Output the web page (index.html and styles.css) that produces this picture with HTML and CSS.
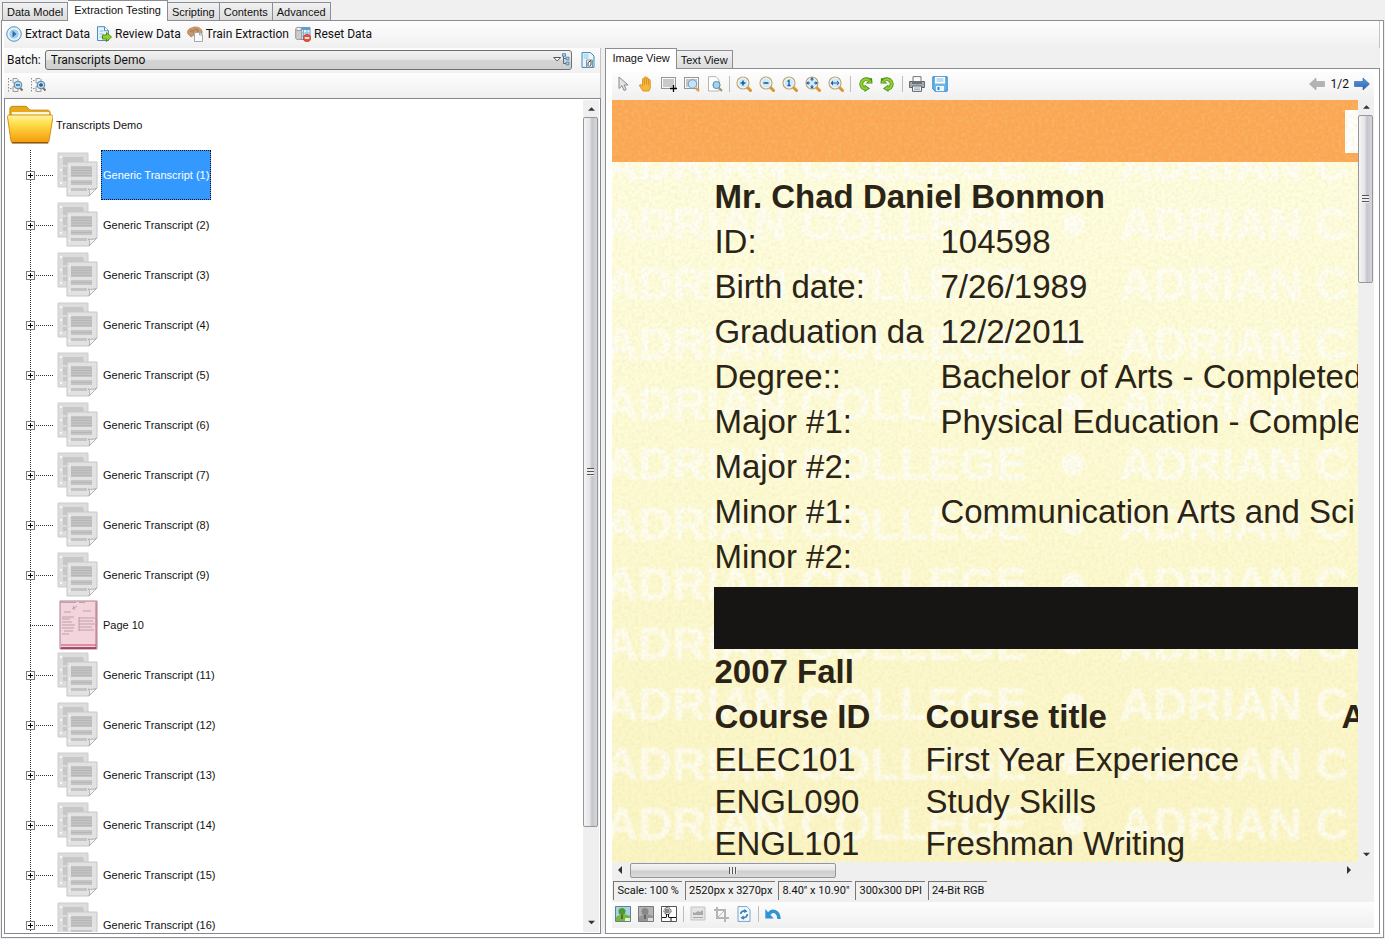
FILE: index.html
```html
<!DOCTYPE html>
<html lang="en">
<head>
<meta charset="utf-8">
<title>Extraction Testing</title>
<link rel="stylesheet" href="styles.css">
</head>
<body>
<svg class="defs" aria-hidden="true">
  <defs>
    <linearGradient id="gold" x1="0" y1="0" x2="0" y2="1"><stop offset="0" stop-color="#fff3a0"/><stop offset=".35" stop-color="#ffdb45"/><stop offset="1" stop-color="#f39a0b"/></linearGradient>
    <linearGradient id="blueArrow" x1="0" y1="0" x2="0" y2="1"><stop offset="0" stop-color="#5e9be0"/><stop offset="1" stop-color="#2a62b0"/></linearGradient>
    <symbol id="doc" viewBox="0 0 42 46">
      <path d="M1 1h30v34H1z" fill="#dcdcdc" stroke="#cdcdcd"/>
      <path d="M6 6h20M6 8h21M6 10h20M6 12h20M6 16h20M6 18h20M6 20h20M6 22h20M6 26h20M6 28h20" stroke="#b2b2b2"/>
      <path d="M10 10h30v26l-8 8H10z" fill="#e2e2e2" stroke="#c6c6c6"/>
      <path d="M14 14h21v11H14zM14 28h21v5H14zM14 36h16v3H14z" fill="#c4c4c4"/>
      <path d="M14 16h21M14 18.500h21M14 21h21M14 23.500h21M14 30.500h21" stroke="#b0b0b0" stroke-width=".7"/>
      <path d="M32 44c1-3 1-6-1-7 3 1 7 0 9-1z" fill="#f4f4f4" stroke="#b0b0b0"/>
      <path d="M3 5h2M3 18h2M3 31h2M12 14h1M12 27h1M12 39h1" stroke="#fff" stroke-width="1.500"/>
    </symbol>
    <symbol id="lens" viewBox="0 0 16 16">
      <path d="M11 11l3.500 3.500" stroke="#d9962f" stroke-width="3" stroke-linecap="round"/>
      <circle cx="7" cy="7" r="6" fill="#cfe9fb" stroke="#c9a469" stroke-width="1.200"/>
      <circle cx="7" cy="7" r="4.800" fill="none" stroke="#eef8ff" stroke-width="1"/>
    </symbol>
    <symbol id="tree-lens" viewBox="0 0 17 16">
      <path d="M1.500 1v14M3 3.500h3M3 11.500h3" stroke="#8a8a8a" stroke-dasharray="1.500 1.500" fill="none"/>
      <path d="M6 1.500h4l1 1V6H6zM6 9.500h4l1 1v4H6z" fill="#f2f2f2" stroke="#9c9c9c"/>
      <path d="M13 11l2.500 2.500" stroke="#7d6e5c" stroke-width="2"/>
      <circle cx="11" cy="8" r="3.800" fill="#b9dbf2" stroke="#5785a8"/>
    </symbol>
  </defs>
</svg>

<nav class="tabs main-tabs" aria-label="Views">
  <button>Data Model</button><button class="active">Extraction Testing</button><button>Scripting</button><button>Contents</button><button>Advanced</button>
</nav>

<main class="window">
  <div class="toolbar actions">
    <button><svg viewBox="0 0 16 16"><circle cx="8" cy="8" r="7.300" fill="#d8ecf9" stroke="#5d93bd"/><circle cx="8" cy="8" r="5.200" fill="#a4d0ee" stroke="#fff" stroke-width=".8"/><path d="M6.500 4.500l4 3.500-4 3.500z" fill="#2a70ad"/></svg>Extract Data</button>
    <button><svg viewBox="0 0 16 16"><path d="M1.500.7h7l4 4v9.800h-11z" fill="#e4f3fc" stroke="#4c8dbd"/><path d="M8.500.7v4h4" fill="#fff" stroke="#4c8dbd"/><path d="M3.500 5h4M3.500 8h4M3.500 11h3" stroke="#8abde0"/><path d="M6.500 9h4V6.500l5 4.500-5 4.500V13h-4z" fill="#95d12e" stroke="#4f8c13"/></svg>Review Data</button>
    <button><svg viewBox="0 0 16 16"><path d="M1 8C-.5 5 2 2 5 2c2-2 8-1 9.500 2C16 6 15 9 12 9l-3 1-2-1-3 2z" fill="#c89a6b" stroke="#a87b50" stroke-width=".7"/><path d="M3 6c2-3 5-1 3 1M7 4c3-2 6 1 3 2" stroke="#91663f" fill="none" stroke-width=".8"/><path d="M7.500 6.500H13L15.500 9v6.500h-8z" fill="#fafafa" stroke="#a7a7a7"/><path d="M12.500 6.500V9h3" fill="none" stroke="#a7a7a7"/></svg>Train Extraction</button>
    <button><svg viewBox="0 0 16 16"><path d="M5 1.500h10v12H5z" fill="#eaf5fd" stroke="#5a9bce"/><path d="M5 2.500h10" stroke="#5aa0d8" stroke-width="3"/><path d="M5 7h10M5 10h10M8.500 4v9M12 4v9" stroke="#79b1da"/><path d="M.7 3v9c0 2 6 2 6 0V3" fill="#ccc" stroke="#969696"/><ellipse cx="3.700" cy="3" rx="3" ry="1.700" fill="#eee" stroke="#969696"/><circle cx="12" cy="12" r="3.700" fill="#e5533d" stroke="#b8301f" stroke-width=".6"/><path d="M9.700 12h4.600" stroke="#fff" stroke-width="1.600"/></svg>Reset Data</button>
  </div>

  <div class="split">
    <section class="left">
      <div class="toolbar batch">
        <label for="batch">Batch:</label>
        <div class="combo">
          <select id="batch"><option>Transcripts Demo</option></select>
          <svg viewBox="0 0 17 13" aria-hidden="true"><path d="M.7 4.500h7L4.200 8z" fill="#fff" stroke="#555"/><path d="M10.500 1v9.500M10.500 5.500h3M10.500 10.500h3" stroke="#666" fill="none"/><path d="M9.500.7h3v2.600h-3zM13 4.200h3v2.600h-3zM13 9.200h3v2.600h-3z" fill="#a7d1f0" stroke="#3e7eab" stroke-width=".8"/></svg>
        </div>
        <button class="icon" aria-label="Batch document"><svg viewBox="0 0 16 16"><path d="M2 .6h8.500L14 4v11.400H2z" fill="#e9f5fc" stroke="#3f86b5"/><path d="M3.500 2h5v5h-5z" fill="#b8def4"/><path d="M6.500 15V8h6v7z" fill="#fff" stroke="#7d98aa"/><path d="M8 14v-3.500l3-2V13l-1.500 1" fill="none" stroke="#444"/></svg></button>
      </div>
      <div class="toolbar find">
        <button class="icon" aria-label="Collapse"><svg viewBox="0 0 17 16"><use href="#tree-lens"/><path d="M9 8h4" stroke="#245b8c" stroke-width="1.300"/></svg></button>
        <button class="icon" aria-label="Expand"><svg viewBox="0 0 17 16"><use href="#tree-lens"/><path d="M9 8h4M11 6v4" stroke="#245b8c" stroke-width="1.300"/></svg></button>
      </div>

      <div class="tree-box">
        <div class="tree">
          <div class="root">
            <svg viewBox="0 0 48 42"><path d="M3 12V4c0-2 1-3 3-3h13c3 0 3 4 6 4h17c2 0 3 1 3 3v8H3z" fill="#e9a71a" stroke="#c5850e"/><path d="M5 7h39v5H5z" fill="#fff6d5"/><path d="M2 10h44c1.500 0 2 1 2 2l-4 24c0 2-1 3-3 3H7c-2 0-3-1-3-3L.5 12c0-1 .5-2 1.500-2z" fill="url(#gold)" stroke="#d48a10"/><path d="M5 39h38" stroke="#8a5a14" stroke-width="1.500"/></svg>
            <span>Transcripts Demo</span>
          </div>
          <ul>
            <li class="selected"><button class="expand" aria-label="Expand"></button><svg><use href="#doc"/></svg><span>Generic Transcript (1)</span></li>
            <li><button class="expand" aria-label="Expand"></button><svg><use href="#doc"/></svg><span>Generic Transcript (2)</span></li>
            <li><button class="expand" aria-label="Expand"></button><svg><use href="#doc"/></svg><span>Generic Transcript (3)</span></li>
            <li><button class="expand" aria-label="Expand"></button><svg><use href="#doc"/></svg><span>Generic Transcript (4)</span></li>
            <li><button class="expand" aria-label="Expand"></button><svg><use href="#doc"/></svg><span>Generic Transcript (5)</span></li>
            <li><button class="expand" aria-label="Expand"></button><svg><use href="#doc"/></svg><span>Generic Transcript (6)</span></li>
            <li><button class="expand" aria-label="Expand"></button><svg><use href="#doc"/></svg><span>Generic Transcript (7)</span></li>
            <li><button class="expand" aria-label="Expand"></button><svg><use href="#doc"/></svg><span>Generic Transcript (8)</span></li>
            <li><button class="expand" aria-label="Expand"></button><svg><use href="#doc"/></svg><span>Generic Transcript (9)</span></li>
            <li class="page"><svg viewBox="0 0 42 50"><path d="M3 1h37v48H3z" fill="#f3d3dc" stroke="#a8808a"/><path d="M39 2v46" stroke="#c76a80"/><path d="M4 45h35" stroke="#c04a68"/><path d="M4 48h35" stroke="#962343" stroke-width="1.500"/><path d="M4 2.500h15M22 2.500h6M15 9l5-3M16 6l2 4M7 12h7M26 11h8M5 17h12M5 19h8M5 22h10M5 25h13M5 28h12M7 31h9M5 34h7M22 18h16M22 21h14M22 24h16M22 27h13M22 30h15M22 17v14" stroke="#a98b95" stroke-width=".7" fill="none"/></svg><span>Page 10</span></li>
            <li><button class="expand" aria-label="Expand"></button><svg><use href="#doc"/></svg><span>Generic Transcript (11)</span></li>
            <li><button class="expand" aria-label="Expand"></button><svg><use href="#doc"/></svg><span>Generic Transcript (12)</span></li>
            <li><button class="expand" aria-label="Expand"></button><svg><use href="#doc"/></svg><span>Generic Transcript (13)</span></li>
            <li><button class="expand" aria-label="Expand"></button><svg><use href="#doc"/></svg><span>Generic Transcript (14)</span></li>
            <li><button class="expand" aria-label="Expand"></button><svg><use href="#doc"/></svg><span>Generic Transcript (15)</span></li>
            <li><button class="expand" aria-label="Expand"></button><svg><use href="#doc"/></svg><span>Generic Transcript (16)</span></li>
          </ul>
        </div>
        <div class="scroll-v tree-scroll">
          <svg class="arrow" viewBox="0 0 8 5"><path d="M4 0l4 4H0z"/></svg>
          <div class="track"><div class="thumb"><i></i></div></div>
          <svg class="arrow" viewBox="0 0 8 5"><path d="M4 4.500l4-4H0z"/></svg>
        </div>
      </div>
    </section>

    <section class="right">
      <nav class="tabs" aria-label="Document view">
        <button class="active">Image View</button><button>Text View</button>
      </nav>
      <div class="viewer">
        <div class="toolbar tools">
          <button class="icon" aria-label="Select"><svg viewBox="0 0 16 16"><path d="M4 1v11.500l3-2.800 2 4.800 2.200-1-2.100-4.500h4z" fill="#e3e3e3" stroke="#8b8b8b"/></svg></button>
          <button class="icon" aria-label="Pan"><svg viewBox="0 0 16 16"><path d="M5 15C3 12 1.500 10.500 1.500 9c.5-1 2-.7 3 1V3.500C4.500 2 6 2 6.300 3.500V1.800c.2-1.500 2-1.300 2 0v.7c.2-1.200 2-1.200 2 .3V4c.5-1 2-.8 2 .5V11c0 2-.8 3-1.300 4z" fill="#f7b638" stroke="#d08a1c" stroke-width=".8"/><path d="M6.400 3.500v5M8.400 2.500v6M10.400 4v5" stroke="#d08a1c" stroke-width=".8"/></svg></button>
          <button class="icon" aria-label="Add region"><svg viewBox="0 0 16 16"><path d="M2 3h11v8H2z" fill="#c9c9c9"/><path d="M.5 1.500h14v11H.5z" fill="none" stroke="#333" stroke-dasharray="1 1"/><path d="M12.500 9v7M9 12.500h7" stroke="#000" stroke-width="1.300"/></svg></button>
          <button class="icon" aria-label="Zoom region"><svg viewBox="0 0 16 16"><path d="M2 3h11v8H2z" fill="#c9c9c9"/><path d="M.5 1.500h14v11H.5z" fill="none" stroke="#333" stroke-dasharray="1 1"/><path d="M12 12l3 3" stroke="#dda14a" stroke-width="2.500"/><circle cx="8.500" cy="8" r="4.300" fill="#c1e2f7" stroke="#6d9ab9"/></svg></button>
          <button class="icon" aria-label="Zoom page"><svg viewBox="0 0 16 16"><path d="M1.500.6H9L12 4v11H1.500z" fill="#fff" stroke="#b5b5b5"/><path d="M12 12l3 3" stroke="#a98a5c" stroke-width="2"/><circle cx="9.500" cy="9" r="3.600" fill="#a5d2ee" stroke="#5485a7"/></svg></button>
          <hr>
          <button class="icon" aria-label="Zoom in"><svg viewBox="0 0 16 16"><use href="#lens"/><path d="M4.500 7h5M7 4.500v5" stroke="#18609c" stroke-width="1.600"/></svg></button>
          <button class="icon" aria-label="Zoom out"><svg viewBox="0 0 16 16"><use href="#lens"/><path d="M4.500 7h5" stroke="#18609c" stroke-width="1.600"/></svg></button>
          <button class="icon" aria-label="Actual size"><svg viewBox="0 0 16 16"><use href="#lens"/><path d="M5.500 5.500L7 4.500V9.500M5.500 9.500h3" stroke="#18609c" stroke-width="1.300" fill="none"/></svg></button>
          <button class="icon" aria-label="Fit page"><svg viewBox="0 0 16 16"><use href="#lens"/><path d="M7 1l2 2.500H5zM7 13l2-2.500H5zM1 7l2.500-2v4zM13 7l-2.500-2v4z" fill="#18609c"/><path d="M7 3v2M7 9v2M3 7h2M9 7h2" stroke="#18609c"/></svg></button>
          <button class="icon" aria-label="Fit width"><svg viewBox="0 0 16 16"><use href="#lens"/><path d="M2.500 7L5 4.500v5zM11.500 7L9 4.500v5zM4 6.500h6v1H4z" fill="#18609c"/></svg></button>
          <hr>
          <button class="icon" aria-label="Rotate left"><svg viewBox="0 0 16 16"><path d="M13 4.800A5 5 0 1 0 8 13" fill="none" stroke="#4e8c14" stroke-width="3.800"/><path d="M15.500 7.500H8.500l3-2.500 1-2.500 2.500-.5zM7.500 8.500l5.500 4-5.500 3.500z" fill="#4e8c14"/><path d="M12.500 4.800A4.800 4.800 0 1 0 8 12.800" fill="none" stroke="#8fd32c" stroke-width="2.200"/><path d="M14.500 6.700h-3.700L14 4zM8.200 10l3.300 2.500-3.300 2z" fill="#8fd32c"/></svg></button>
          <button class="icon" aria-label="Rotate right"><svg viewBox="0 0 16 16"><path d="M3 4.800A5 5 0 1 1 8 13" fill="none" stroke="#4e8c14" stroke-width="3.800"/><path d="M.5 7.500h7l-3-2.500-1-2.500L1 2zM8.500 8.500L3 12.500 8.500 16z" fill="#4e8c14"/><path d="M3.500 4.800A4.800 4.800 0 1 1 8 12.800" fill="none" stroke="#8fd32c" stroke-width="2.200"/><path d="M1.500 6.700h3.700L2 4zM7.800 10l-3.300 2.500 3.300 2z" fill="#8fd32c"/></svg></button>
          <hr>
          <button class="icon" aria-label="Print"><svg viewBox="0 0 16 16"><path d="M4 .6h8V6H4z" fill="#fafafa" stroke="#777"/><path d="M.6 5.500h14.800v6H.6z" fill="#a9adb1" stroke="#5d6165"/><path d="M3 5h10v3H3z" fill="#6d7278"/><path d="M3.500 10h9v5.400h-9z" fill="#eef6fc" stroke="#666"/><path d="M5 12h6M5 13.700h6" stroke="#9ab"/></svg></button>
          <button class="icon" aria-label="Save"><svg viewBox="0 0 16 16"><path d="M.8.8h14.400v14.400H3L.8 13z" fill="#6ab5ea" stroke="#2d86c7"/><path d="M3 1h10v6.500H3z" fill="#fff"/><path d="M4.500 3h7M4.500 5h7" stroke="#85b6d8"/><path d="M4 10h8v5H4z" fill="#eef6fb"/><path d="M5.500 11h2v3h-2z" fill="#2d86c7"/></svg></button>
          <div class="pager">
            <button class="icon" aria-label="Previous page"><svg viewBox="0 0 16 16"><path d="M.5 8L7 2v3.500h8.500v5H7V14z" fill="#b3b3b3" stroke="#9d9d9d" stroke-width=".6"/></svg></button>
            <span>1/2</span>
            <button class="icon" aria-label="Next page"><svg viewBox="0 0 16 16"><path d="M15.500 8L9 2v3.500H.5v5H9V14z" fill="url(#blueArrow)" stroke="#2c5f9f" stroke-width=".6"/></svg></button>
          </div>
        </div>

        <div class="canvas">
          <div class="scan">
            <div class="watermark" aria-hidden="true">
              <p>ADRIAN COLLEGE<i></i>ADRIAN C</p>
              <p>ADRIAN COLLEGE<i></i>ADRIAN C</p>
              <p>ADRIAN COLLEGE<i></i>ADRIAN C</p>
              <p>ADRIAN COLLEGE<i></i>ADRIAN C</p>
              <p>ADRIAN COLLEGE<i></i>ADRIAN C</p>
              <p>ADRIAN COLLEGE<i></i>ADRIAN C</p>
              <p>ADRIAN COLLEGE<i></i>ADRIAN C</p>
              <p>ADRIAN COLLEGE<i></i>ADRIAN C</p>
              <p>ADRIAN COLLEGE<i></i>ADRIAN C</p>
              <p>ADRIAN COLLEGE<i></i>ADRIAN C</p>
              <p>ADRIAN COLLEGE<i></i>ADRIAN C</p>
              <p>ADRIAN COLLEGE<i></i>ADRIAN C</p>
            </div>
            <div class="banner"><div class="notch"></div></div>
            <svg class="grain" aria-hidden="true"><filter id="paper"><feTurbulence type="fractalNoise" baseFrequency=".3" numOctaves="2" seed="4"/><feColorMatrix values="0 0 0 0 .8  0 0 0 0 .72  0 0 0 0 .3  .6 0 0 0 -.22"/></filter><rect width="100%" height="100%" filter="url(#paper)"/></svg>
            <div class="record">
              <h1>Mr. Chad Daniel Bonmon</h1>
              <dl>
                <dt>ID:</dt><dd>104598</dd>
                <dt>Birth date:</dt><dd>7/26/1989</dd>
                <dt>Graduation da</dt><dd>12/2/2011</dd>
                <dt>Degree::</dt><dd>Bachelor of Arts - Completed</dd>
                <dt>Major #1:</dt><dd>Physical Education - Comple</dd>
                <dt>Major #2:</dt><dd></dd>
                <dt>Minor #1:</dt><dd>Communication Arts and Sci</dd>
                <dt>Minor #2:</dt><dd></dd>
              </dl>
              <div class="bar"></div>
              <h2>2007 Fall</h2>
              <table>
                <thead><tr><th class="c-id">Course ID</th><th class="c-title">Course title</th><th class="c-att">A</th></tr></thead>
                <tbody>
                  <tr><td>ELEC101</td><td>First Year Experience</td><td></td></tr>
                  <tr><td>ENGL090</td><td>Study Skills</td><td></td></tr>
                  <tr><td>ENGL101</td><td>Freshman Writing</td><td></td></tr>
                </tbody>
              </table>
            </div>
          </div>
          <div class="scroll-v image-scroll">
            <svg class="arrow" viewBox="0 0 8 5"><path d="M4 0l4 4H0z"/></svg>
            <div class="track"><div class="thumb"><i></i></div></div>
            <svg class="arrow" viewBox="0 0 8 5"><path d="M4 4.500l4-4H0z"/></svg>
          </div>
          <div class="scroll-h">
            <svg class="arrow" viewBox="0 0 5 8"><path d="M4 0v8L0 4z"/></svg>
            <div class="track"><div class="thumb"><i></i></div></div>
            <svg class="arrow" viewBox="0 0 5 8"><path d="M1 0v8l4-4z"/></svg>
          </div>
        </div>

        <div class="status"><span>Scale: 100 %</span><span>2520px x 3270px</span><span>8.40" x 10.90"</span><span>300x300 DPI</span><span>24-Bit RGB</span></div>

        <div class="toolbar tools bottom">
          <button class="icon" aria-label="Color image"><svg viewBox="0 0 16 16"><path d="M.5.5h15v15H.5z" fill="#a6d2ee" stroke="#667f8c"/><path d="M1 11c5-3 9-3 14-1v5H1z" fill="#72b840"/><path d="M6 8h2v5H6z" fill="#7a5a36"/><circle cx="7" cy="5.500" r="3.500" fill="#4d9b2c"/><path d="M10 12h5v3h-5z" fill="#e8f2c8"/></svg></button>
          <button class="icon" aria-label="Grayscale image"><svg viewBox="0 0 16 16"><path d="M.5.5h15v15H.5z" fill="#b5b5b5" stroke="#7a7a7a"/><path d="M1 11c5-3 9-3 14-1v5H1z" fill="#969696"/><path d="M6 8h2v5H6z" fill="#666"/><circle cx="7" cy="5.500" r="3.500" fill="#888"/><path d="M10 12h5v3h-5z" fill="#ddd"/></svg></button>
          <button class="icon" aria-label="Binary image"><svg viewBox="0 0 16 16"><path d="M.5.5h15v15H.5z" fill="#fff" stroke="#555"/><circle cx="6.500" cy="5" r="3.500" fill="#fff" stroke="#222" stroke-dasharray="1 .6"/><path d="M4 4h5M4 6h5M5 2.500v5M7 2.500v5" stroke="#333" stroke-width=".7"/><path d="M5.500 8v3M7.500 8v3M1 11.500h4.500M7.500 11.500H15M10 12v3" stroke="#111" fill="none"/></svg></button>
          <hr>
          <button class="icon" aria-label="Adjust"><svg viewBox="0 0 16 16"><path d="M1 1h14v13H1z" fill="#e4e4e4" stroke="#c3c3c3"/><path d="M3 9V6l2 1 3-2 2 1 3-2v5z" fill="#a8a8a8"/><path d="M3 11.500h10" stroke="#a8a8a8"/></svg></button>
          <button class="icon" aria-label="Crop"><svg viewBox="0 0 16 16"><path d="M4 1v11h12M1 4h11v12" fill="none" stroke="#b5b5b5" stroke-width="2"/><path d="M5 11l8-8" stroke="#b5b5b5"/></svg></button>
          <button class="icon" aria-label="Refresh"><svg viewBox="0 0 16 16"><path d="M2 .6h9L14 4v11.400H2z" fill="#f4faff" stroke="#7ba5c4"/><path d="M4.700 8a3.500 3.500 0 0 1 4.500-3M11.300 8a3.500 3.500 0 0 1-4.500 3.500" fill="none" stroke="#3c7fb5" stroke-width="1.700"/><path d="M8.500 2.700l3 2.800-3.500 1.500zM7.500 9.300L4.500 12l3.500 1.700z" fill="#3c7fb5"/></svg></button>
          <hr>
          <button class="icon" aria-label="Undo"><svg viewBox="0 0 16 16"><path d="M4 8C7 3.500 13.500 4.500 14 13" fill="none" stroke="#2f94d4" stroke-width="3.400"/><path d="M.3 3v9.500h8.400z" fill="#2f94d4"/></svg></button>
        </div>
      </div>
    </section>
  </div>
</main>
</body>
</html>
```
FILE: styles.css
```css
* { box-sizing: border-box; }

body {
  margin: 0;
  height: 100vh;
  display: flex;
  flex-direction: column;
  overflow: hidden;
  background: #f0f0f0;
  color: #111;
  font: 12px/16px Roboto, "Liberation Sans", sans-serif;
}

.defs { position: absolute; width: 0; height: 0; }

button {
  font: inherit;
  color: inherit;
  border: 0;
  padding: 0;
  background: none;
}

/* Tabs */
.tabs {
  display: flex;
  align-items: flex-end;
  height: 20px;
  flex: none;
  font: 11px/16px "Liberation Sans", Arial, sans-serif;
}
.main-tabs { padding-left: 2px; }
.tabs button {
  height: 18px;
  padding: 0 4px;
  border: 1px solid #8c8e94;
  border-left-width: 0;
  border-bottom: 0;
  background: linear-gradient(#f2f2f2, #dcdcdc);
  white-space: nowrap;
}
.tabs button:first-child { border-left-width: 1px; }
.tabs .active {
  height: 21px;
  margin-bottom: -1px;
  padding: 0 6px 2px;
  background: #fff;
  z-index: 1;
}

.window {
  flex: 1;
  min-height: 0;
  display: flex;
  flex-direction: column;
  margin: 0 1px 1px;
  border: 1px solid #8c8e94;
  padding: 0 3px 3px 2px;
  background: #fff;
}

/* Toolbars */
.toolbar {
  display: flex;
  align-items: center;
  flex: none;
  padding-bottom: 2px;
  background: linear-gradient(#fdfdfd, #f0f0f0);
}
.toolbar svg { width: 16px; height: 16px; flex: none; display: block; }
.actions {
  height: 27px;
  gap: 6px;
  padding-left: 2px;
  border-right: 1px solid #c4c4c4;
}
.actions button { display: flex; align-items: center; gap: 3px; }

.split {
  flex: 1;
  min-height: 0;
  display: grid;
  grid-template-columns: 597fr 774fr;
  gap: 4px;
  background: #f0f0f0;
}
.left, .right { display: flex; flex-direction: column; min-height: 0; min-width: 0; }

.batch { height: 25px; padding: 0 4px 2px 3px; gap: 4px; border-right: 1px solid #c4c4c4; }
.combo { position: relative; flex: 1; margin-right: 4px; }
.combo select {
  display: block;
  width: 100%;
  height: 20px;
  appearance: none;
  border: 1px solid #707070;
  border-radius: 3px;
  padding: 0 5px;
  background: linear-gradient(#f2f2f2, #e6e6e6 50%, #d4d4d4 52%, #cfcfcf);
  font: inherit;
  color: inherit;
}
.combo svg {
  position: absolute;
  right: 2px;
  top: 3px;
  width: 17px;
  height: 13px;
  pointer-events: none;
}
.find { height: 25px; padding-left: 3px; gap: 6px; border-right: 1px solid #c4c4c4; }
.find svg { width: 17px; }

/* Tree */
.tree-box {
  flex: 1;
  min-height: 0;
  display: flex;
  border: 1px solid #828790;
  padding: 1px;
  background: #fff;
}
.tree { flex: 1; overflow: hidden; font: 11px/16px "Liberation Sans", Arial, sans-serif; }
.root { display: flex; align-items: center; height: 50px; gap: 3px; padding-left: 1px; }
.root svg { width: 46px; height: 41px; }
.tree ul { list-style: none; margin: 0; padding: 0 0 0 24px; }
.tree li {
  display: grid;
  grid-template-columns: 26px 43px 1fr;
  column-gap: 1px;
  align-items: center;
  height: 50px;
  background:
    repeating-linear-gradient(#333 0 1px, transparent 1px 2px) 0 0 / 1px 100% no-repeat,
    repeating-linear-gradient(90deg, #333 0 1px, transparent 1px 2px) 0 25px / 23px 1px no-repeat;
}
.tree li svg { grid-column: 2; width: 42px; height: 46px; }
.tree li.page svg { height: 50px; }
.tree li span {
  justify-self: start;
  padding: 0 1px;
  line-height: 48px;
  border: 1px solid transparent;
}
.tree .selected span { background: #3399ff; color: #fff; border: 1px dotted #111; }
.expand {
  width: 9px;
  height: 9px;
  margin-left: -4px;
  margin-top: 1px;
  border: 1px solid #7d7d7d;
  background:
    linear-gradient(#000, #000) center / 5px 1px no-repeat,
    linear-gradient(#000, #000) center / 1px 5px no-repeat,
    #fff;
}

/* Scroll bars */
.scroll-v {
  display: flex;
  flex-direction: column;
  align-items: center;
  width: 16px;
  padding: 7px 0;
  background: #efefef;
}
.arrow { width: 7px; height: 5px; flex: none; fill: #333; }
.scroll-v .track { flex: 1; width: 100%; padding: 5px 1px 5px 0; }
.image-scroll { padding: 5px 0; }
.thumb {
  display: flex;
  align-items: center;
  justify-content: center;
  border: 1px solid #979797;
  border-radius: 2px;
}
.scroll-v .thumb { background: linear-gradient(90deg, #f5f5f5, #e4e4e8 45%, #c4c4cc 60%, #d6d6da); }
.tree-scroll .thumb { height: 89%; }
.image-scroll .thumb { height: 23%; }
.scroll-v .thumb i {
  width: 7px;
  height: 8px;
  background: repeating-linear-gradient(#555 0 1px, #eee 1px 3px);
}
.scroll-h {
  grid-column: 1;
  display: flex;
  align-items: center;
  height: 16px;
  padding: 0 7px 0 6px;
  background: #efefef;
}
.scroll-h .arrow { width: 5px; height: 8px; }
.scroll-h .track { flex: 1; padding: 0 7px; }
.scroll-h .thumb { width: 29%; height: 15px; background: linear-gradient(#f5f5f5, #e6e6e6 45%, #cecece 55%, #dadada); }
.scroll-h .thumb i { width: 8px; height: 7px; background: repeating-linear-gradient(90deg, #555 0 1px, #eee 1px 3px); }

/* Viewer */
.viewer {
  flex: 1;
  min-height: 0;
  display: flex;
  flex-direction: column;
  border: 1px solid #8c8e94;
  padding: 3px 5px 5px 6px;
  background: #fff;
}
.tools { height: 28px; padding-bottom: 4px; }
.tools .icon { width: 23px; display: flex; justify-content: flex-start; padding-left: 3px; }
.tools hr { width: 1px; height: 16px; margin: 0 3px 0 2px; border: 0; background: #bdbdbd; }
.pager { display: flex; align-items: center; gap: 2px; margin-left: auto; }
.tools.bottom { height: 26px; padding-bottom: 2px; }

.canvas {
  flex: 1;
  min-height: 0;
  display: grid;
  grid-template: minmax(0, 1fr) auto / minmax(0, 1fr) 16px;
  background: #efefef;
}
.scan {
  position: relative;
  overflow: hidden;
  background: linear-gradient(#fefee4, #fdfbd6 50%, #fbf5c6);
  color: #2b2416;
  font: 33px/45px "Liberation Sans", Arial, sans-serif;
  white-space: nowrap;
}
.watermark {
  position: absolute;
  inset: 34px 0 0 -8px;
  color: #fff;
  opacity: .7;
  font-weight: bold;
  font-size: 47px;
  line-height: 60px;
  filter: blur(1px);
}
.watermark p { display: flex; align-items: center; gap: 35px; margin: 0; }
.watermark i { flex: none; width: 22px; height: 22px; border-radius: 50%; background: #fff; }
.grain { position: absolute; inset: 0; width: 100%; height: 100%; }
.banner {
  position: relative;
  display: flex;
  justify-content: flex-end;
  align-items: center;
  height: 62px;
  background: #fca552;
}
.notch { width: 13px; height: 43px; background: #fff; }
.record { position: relative; padding: 12px 0 0 102px; }
.record h1, .record h2 { margin: 0; font: inherit; font-weight: bold; }
.record dl { display: grid; grid-template-columns: 226px 1fr; grid-auto-rows: 45px; margin: 0; }
.record dd { margin: 0; }
.bar { height: 62px; margin-top: 8px; background: #161514; }
.record table { width: 100%; table-layout: fixed; border-collapse: collapse; }
.record th, .record td { padding: 0; text-align: left; line-height: 42px; }
.record th { line-height: 45px; }
.c-id { width: 211px; }
.c-title { width: 416px; }

.status { display: flex; gap: 3px; height: 24px; padding: 3px 1px 2px; background: #f0f0f0; font-size: 11px; }
.status span {
  padding: 1px 3px;
  border-left: 1px solid #777;
  border-top: 1px solid #777;
}
```
